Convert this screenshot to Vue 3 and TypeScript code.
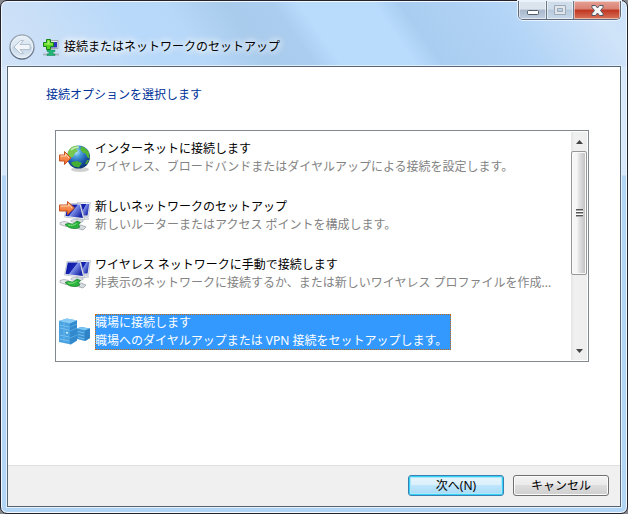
<script setup lang="ts">
import { computed, ref } from 'vue'

interface ConnectionOption {
  id: 'internet' | 'network' | 'wireless' | 'workplace'
  title: string
  description: string
}

const options: ConnectionOption[] = [
  {
    id: 'internet',
    title: 'インターネットに接続します',
    description: 'ワイヤレス、ブロードバンドまたはダイヤルアップによる接続を設定します。',
  },
  {
    id: 'network',
    title: '新しいネットワークのセットアップ',
    description: '新しいルーターまたはアクセス ポイントを構成します。',
  },
  {
    id: 'wireless',
    title: 'ワイヤレス ネットワークに手動で接続します',
    description: '非表示のネットワークに接続するか、または新しいワイヤレス プロファイルを作成...',
  },
  {
    id: 'workplace',
    title: '職場に接続します',
    description: '職場へのダイヤルアップまたは VPN 接続をセットアップします。',
  },
]

const selected = ref<ConnectionOption['id']>('workplace')
const visibleShare = ref(0.65)
const thumbStyle = computed(() => ({ height: `${visibleShare.value * 100}%` }))
</script>

<template>
  <div class="window">
    <header class="titlebar">
      <div class="caption-buttons">
        <button class="caption minimize" type="button" aria-label="最小化">
          <svg width="14" height="8" viewBox="0 0 14 8"><rect x="1.500" y="2.500" width="11" height="4" rx="1" fill="#fff" stroke="#505a68" /></svg>
        </button>
        <button class="caption maximize" type="button" aria-label="最大化" disabled>
          <svg width="12" height="10" viewBox="0 0 12 10"><path d="M.5.5h11v9H.5zM3.500 3.500h5v3h-5z" fill="#e0e6ec" fill-rule="evenodd" stroke="#9ba9b8" /></svg>
        </button>
        <button class="caption close" type="button" aria-label="閉じる">
          <svg width="13" height="11" viewBox="0 0 13 11"><path d="M1 .5h3.500l2 2.500L8.500.5H12v2L9.500 5.500l2.500 3v2H8.500L6.500 8l-2 2.500H1v-2l2.500-3L1 2.500z" fill="#f8f8f8" stroke="#505766" stroke-linejoin="round" /></svg>
        </button>
      </div>
      <div class="title-row">
        <button class="back" type="button" aria-label="戻る" disabled>
          <svg width="26" height="26" viewBox="0 0 26 26">
            <defs>
              <linearGradient id="orb" x1="0" y1="0" x2="0" y2="1">
                <stop offset="0" stop-color="#e9f1f9" /><stop offset=".48" stop-color="#d6e3ef" />
                <stop offset=".52" stop-color="#c3d5e6" /><stop offset="1" stop-color="#e3edf6" />
              </linearGradient>
              <linearGradient id="orbEdge" x1="0" y1="0" x2="0" y2="1">
                <stop offset="0" stop-color="#9eabb9" /><stop offset="1" stop-color="#5d6c80" />
              </linearGradient>
            </defs>
            <circle cx="13" cy="13" r="12" fill="url(#orb)" stroke="url(#orbEdge)" stroke-width="1.300" />
            <circle cx="13" cy="13" r="10.800" fill="none" stroke="#f3f8fc" stroke-opacity=".8" />
            <path d="M5 13l6.500-6.500h3L11 10.500h10v5H11l3.500 4h-3z" fill="#f2f6fa" stroke="#b2bfcd" stroke-linejoin="round" />
          </svg>
        </button>
        <svg class="app-icon" width="16" height="17" viewBox="0 0 16 17" aria-hidden="true">
          <path d="M7 1.500h8v8H6v-5z" fill="#e6ebef" stroke="#a0a8b0" />
          <path d="M8 3h6v5.500H8z" fill="#2a35bb" />
          <path d="M8 3h3.500l-2 5.500H8z" fill="#5b68d6" />
          <path d="M0 15.500h16" stroke="#a9b6be" stroke-width="2" />
          <path d="M4 11h8v1.500l-2 .5v2h2v1.500H4V15h2v-2l-2-.500z" fill="#20b878" stroke="#128552" stroke-width=".5" />
          <path d="M3.500.5h4v3h3v4h-3v3h-4v-3h-3v-4h3z" fill="#5bd321" stroke="#188718" />
          <path d="M4.500 1.500h2v3h3v1h-8v-1h3z" fill="#a6f268" />
        </svg>
        <h1 class="title">接続またはネットワークのセットアップ</h1>
      </div>
    </header>

    <form class="content" @submit.prevent>
      <main class="body">
        <h2 id="prompt" class="prompt">接続オプションを選択します</h2>
        <div class="list-frame">
          <ul class="options" aria-labelledby="prompt">
            <li v-for="option in options" :key="option.id">
              <button
                type="button"
                class="option"
                :class="{ selected: option.id === selected }"
                :aria-pressed="option.id === selected"
                @click="selected = option.id"
              >
                <svg v-if="option.id === 'internet'" class="option-icon" viewBox="0 0 32 32" aria-hidden="true">
                  <defs>
                    <radialGradient id="ocean" cx=".4" cy=".28" r=".75">
                      <stop offset="0" stop-color="#b9e8fb" /><stop offset=".3" stop-color="#489bd8" />
                      <stop offset=".7" stop-color="#1952a6" /><stop offset="1" stop-color="#07306e" />
                    </radialGradient>
                    <linearGradient id="arrow" x1="0" y1="0" x2="0" y2="1">
                      <stop offset="0" stop-color="#ffb37a" /><stop offset="1" stop-color="#ee6425" />
                    </linearGradient>
                  </defs>
                  <ellipse cx="21" cy="27.500" rx="9" ry="2.500" fill="#777" opacity=".35" />
                  <circle cx="19.500" cy="15" r="11.500" fill="url(#ocean)" />
                  <path d="M9 10c2-5 6-7 10-6l1 2-3 1 2 2-3 2-2 4-4 1-2-2z" fill="#78c84e" />
                  <path d="M22 4.500c3 0 6 3 8 6l.500 6-2-1-2-4-3-1-2-3z" fill="#55b834" />
                  <path d="M13 20l5-1 5 2-3 4.500-5-1-3-3z" fill="#43ae33" />
                  <path d="M28 18l2 0-2 4-2 0z" fill="#50a43b" />
                  <path d="M12 8c2-2 5-3 8-3" fill="none" stroke="#dff6e7" stroke-width="1.500" opacity=".7" />
                  <path d="M.500 13h5V9.500l6.500 6.500-6.500 6.500V19h-5z" fill="url(#arrow)" stroke="#c75522" />
                  <path d="M1.500 14h5v-2l3.500 4" fill="none" stroke="#ffd0a8" />
                </svg>

                <svg v-else-if="option.id !== 'workplace'" class="option-icon" viewBox="0 0 32 32" aria-hidden="true">
                  <defs>
                    <linearGradient :id="`screen-${option.id}`" x1="0" y1="0" x2="1" y2=".6">
                      <stop offset="0" stop-color="#0b1aa8" /><stop offset=".5" stop-color="#1624b0" />
                      <stop offset=".54" stop-color="#7d90e8" /><stop offset="1" stop-color="#1927a9" />
                    </linearGradient>
                  </defs>
                  <path d="M18 2.500h13.500l-2 14.500h-9z" fill="#ecf0f4" stroke="#bcc4cd" stroke-width=".7" />
                  <path d="M20 4h10.300l-1.800 11.500H21z" :fill="`url(#screen-${option.id})`" />
                  <path d="M24 17h4l2 2-7 1z" fill="#e3e7eb" stroke="#a7afb8" stroke-width=".5" />
                  <path d="M8 3.500h13.500l4 16L5.500 17z" fill="#f4f6f8" stroke="#b0b8c1" stroke-width=".7" />
                  <path d="M8.700 4.500h12l3.300 13.500L6.500 16z" :fill="`url(#screen-${option.id})`" />
                  <ellipse cx="18" cy="21" rx="6.500" ry="1.600" fill="#dce1e6" stroke="#9ba4ae" stroke-width=".6" />
                  <path d="M1 22.500l4-1 5 1 2 3-5 1-6-2z" fill="#e6e9eb" stroke="#9ba1a6" stroke-width=".7" />
                  <path d="M17 26l5-1 5 2-3 3-7-2z" fill="#d7dce0" stroke="#8f999f" stroke-width=".7" />
                  <path d="M6 24.500c3-2 6-.5 8-.5l4-3 3.500 1.500-2 2.500 1.500 2-4 1.500c-5 .5-8-1-11-4z" fill="#29b43e" stroke="#147c25" stroke-width=".7" />
                  <path d="M9 25c3 .5 6 .5 8.500-1.500" fill="none" stroke="#8ee483" />
                  <template v-if="option.id === 'network'">
                    <path d="M.500 5h8V1.500l7 6.500-7 6.500V11h-8z" fill="url(#arrow)" stroke="#c75522" />
                    <path d="M1.500 6h8V4l3.500 4" fill="none" stroke="#ffd0a8" />
                  </template>
                </svg>

                <svg v-else class="option-icon" viewBox="0 0 32 32" aria-hidden="true">
                  <path d="M18 12.500l4-1.500 9 1.500v9.500l-5 3-8-2z" fill="#3a93d4" />
                  <path d="M18 12.500l4-1.500 9 1.500-5 2z" fill="#79c5f3" />
                  <path d="M26 14.500l5-2V22l-5 3z" fill="#2f83c6" />
                  <path d="M19 15.500l6 1.300M19 18.500l6 1.300M19 21.500l6 1.300" stroke="#78bdec" />
                  <path d="M0 5l8-2.500L18 4.500v20l-6 4L0 26z" fill="#4aa2e0" />
                  <path d="M0 5l8-2.500 10 2-7 3z" fill="#87cbf5" />
                  <path d="M11 7.500l7-3v20l-7 4z" fill="#3389cd" />
                  <path d="M1 9l9 2M1 12l9 2M1 19l9 2M1 23l9 2" stroke="#78c0f0" />
                  <path d="M11 11l7-3M11 15l7-3M11 22l7-3" stroke="#54a9df" />
                  <path d="M5 6v20" stroke="#6bb9ec" stroke-width=".8" />
                  <path d="M7 16.500l2 .5" stroke="#d4f4ff" stroke-width="1.500" />
                </svg>

                <span class="option-text">
                  <span>{{ option.title }}</span>
                  <span class="description">{{ option.description }}</span>
                </span>
              </button>
            </li>
          </ul>
          <div class="scrollbar">
            <button class="scroll-arrow" type="button" aria-label="上へスクロール">
              <svg width="7" height="4" viewBox="0 0 7 4"><path d="M0 4l3.500-4L7 4z" fill="#444" /></svg>
            </button>
            <div class="track">
              <div class="thumb" :style="thumbStyle">
                <span class="grip"></span>
              </div>
            </div>
            <button class="scroll-arrow" type="button" aria-label="下へスクロール">
              <svg width="7" height="4" viewBox="0 0 7 4"><path d="M0 0h7L3.500 4z" fill="#444" /></svg>
            </button>
          </div>
        </div>
      </main>
      <footer class="footer">
        <button class="action primary" type="submit">次へ(N)</button>
        <button class="action" type="button">キャンセル</button>
      </footer>
    </form>
  </div>
</template>

<style>
html {
  background: #85878a;
}
</style>

<style scoped>
* {
  box-sizing: border-box;
}

button {
  margin: 0;
  padding: 0;
  border: 0;
  background: none;
  color: inherit;
  font: inherit;
}

svg {
  display: block;
}

.window {
  display: flex;
  flex-direction: column;
  min-height: 100vh;
  padding: 0 6px 6px;
  border: 1px solid #23232f;
  border-radius: 7px;
  background:
    linear-gradient(55deg, #d0e3f8 0, #c9dff7 10%, #b8d9fa 24%, #b7d8f8 31%, #a9cbec 40%, #abcdef 47%, #b9dcfd 51%, #b9dcfd 62%, #a9cdf0 66%, #b2d4f6 80%, #cfe3f9 94%, #cde3f9 100%) 0 0 / 100% 66px no-repeat,
    linear-gradient(#d7e8fa 0 174px, #b2d4f5 175px 100%);
  box-shadow: inset 0 0 0 1px #f2f8fe;
  color: #000;
  font: 12px/18px "Noto Sans", "Noto Sans CJK JP", sans-serif;
}

.titlebar {
  display: flex;
  flex-direction: column;
  height: 65px;
}

.caption-buttons {
  display: flex;
  align-self: flex-end;
  height: 19px;
  border: 1px solid #5e6a7a;
  border-top: 0;
  border-radius: 0 0 5px 5px;
  overflow: hidden;
  box-shadow: 0 0 0 1px #e8f3fd;
}

.caption {
  display: grid;
  place-items: center;
  width: 28px;
  border-right: 1px solid #6c7989;
  background: linear-gradient(#dbe4ed 0 45%, #a8b7c9 50%, #c0d0e2);
  box-shadow: inset 0 0 0 1px rgb(255 255 255 / 50%);
}

.minimize {
  padding-top: 4px;
}

.maximize {
  width: 27px;
  background: linear-gradient(#cfdce9 0 45%, #b7c9dc 50%, #c8d8e8);
}

.close {
  width: 46px;
  border-right: 0;
  background: linear-gradient(#e5a194 0, #d98172 45%, #bf3420 50%, #d8745a);
}

.title-row {
  display: flex;
  align-items: center;
  gap: 5px;
  padding: 14px 2px 0;
}

.app-icon {
  margin-left: 3px;
}

.title {
  margin: 0;
  font-size: 12px;
  font-weight: 400;
  text-shadow: 0 0 6px #fff, 0 0 8px #fff, 0 0 10px #fff;
}

.content {
  display: flex;
  flex: 1;
  flex-direction: column;
  border: 1px solid #566573;
  background: #fff;
  box-shadow: 0 0 0 1px #e3f0fc;
}

.body {
  flex: 1;
  padding: 19px 31px 18px 38px;
}

.prompt {
  margin: 0 0 26px;
  color: #003399;
  font-size: 12px;
  font-weight: 400;
}

.list-frame {
  display: flex;
  margin-left: 9px;
  padding: 1px;
  border: 1px solid #828790;
}

.options {
  display: flex;
  flex: 1;
  flex-direction: column;
  gap: 22px;
  min-width: 0;
  margin: 0;
  padding: 8px 2px 10px;
  list-style: none;
}

.option {
  display: flex;
  align-items: center;
  gap: 4px;
  max-width: 100%;
  text-align: left;
}

.option-icon {
  flex: none;
  width: 32px;
  height: 32px;
}

.option-text {
  display: flex;
  flex-direction: column;
  white-space: nowrap;
}

.description {
  color: #838383;
}

.selected .option-text {
  position: relative;
  padding-right: 4px;
  background: #3399ff;
  color: #fff;
}

.selected .option-text::after {
  content: "";
  position: absolute;
  inset: 0;
  border: 1px dotted #cc6600;
}

.selected .description {
  color: #fff;
}

.scrollbar {
  display: flex;
  flex: none;
  flex-direction: column;
  width: 16px;
  background: linear-gradient(90deg, #e5e5e5, #f0f0f0 20%, #eee);
}

.scroll-arrow {
  display: grid;
  place-items: center;
  height: 19px;
}

.track {
  flex: 1;
}

.thumb {
  display: grid;
  place-items: center;
  border: 1px solid #979797;
  border-radius: 2px;
  background: linear-gradient(90deg, #f6f6f6 0 35%, #e2e2e4 50%, #c5c5c9 90%, #ddd);
  box-shadow: inset 0 0 0 1px #fafafa;
}

.grip {
  width: 7px;
  height: 8px;
  background: repeating-linear-gradient(#555 0 1px, #aaa 1px 2px, #fff 2px 3px);
}

.footer {
  display: flex;
  justify-content: flex-end;
  gap: 9px;
  padding: 9px 11px 10px;
  border-top: 1px solid #dfdfdf;
  background: #f0f0f0;
}

.action {
  width: 96px;
  height: 21px;
  border: 1px solid #707070;
  border-radius: 3px;
  background: linear-gradient(#f2f2f2 0, #ebebeb 48%, #dddddd 50%, #cfcfcf);
  box-shadow: inset 0 0 0 1px #fcfcfc;
}

.primary {
  border-color: #3c7fb1;
  background: linear-gradient(#e9f5fc 0, #d9f0fc 48%, #bee6fd 50%, #a7d9f5);
  box-shadow: inset 0 0 0 1px #36d1f8, inset 0 0 0 2px #a9e8fb;
}
</style>
